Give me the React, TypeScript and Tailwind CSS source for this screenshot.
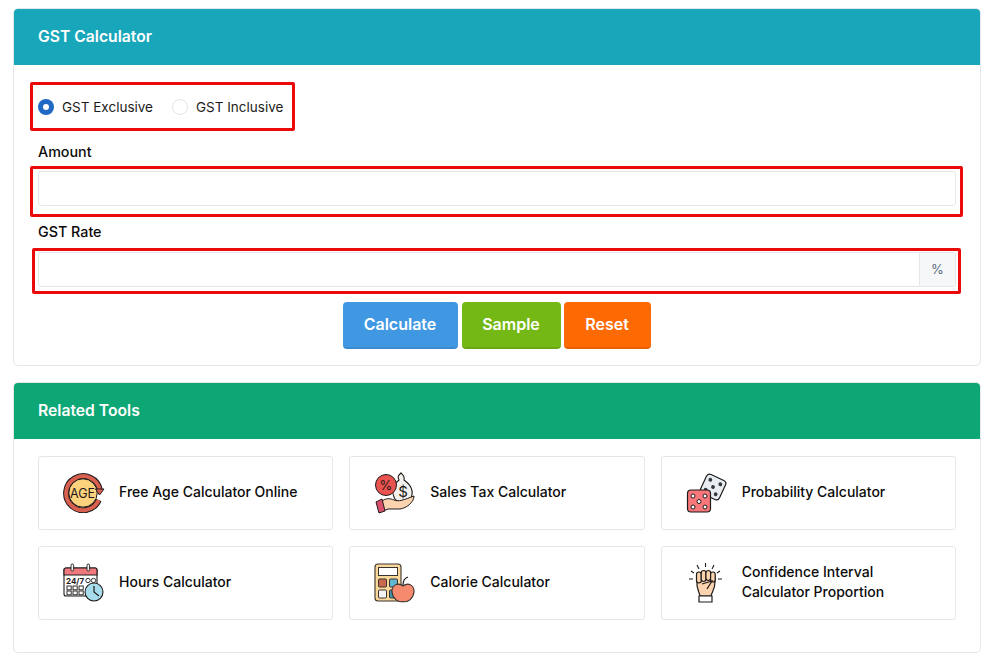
const font = { fontFamily: '"Inter", "Noto Sans", sans-serif' };

function AgeIcon() {
  return (
    <svg width="42" height="40" viewBox="0 0 42 40">
      <path d="M35.7 27 A17 17 0 1 1 36.8 17" fill="none" stroke="#1f1a1a" strokeWidth="6" />
      <path d="M35.7 27 A17 17 0 1 1 36.8 17" fill="none" stroke="#d9604f" strokeWidth="4" />
      <circle cx="20" cy="20" r="14.2" fill="#fdd27d" stroke="#1f1a1a" strokeWidth="1" />
      <path d="M32.5 16 H41 L36.5 22 Z" fill="#d9604f" stroke="#1f1a1a" strokeWidth="1" />
      <text x="19.5" y="24.5" textAnchor="middle" fontSize="12.5" fill="#1f1a1a" fontFamily="Inter, sans-serif">AGE</text>
    </svg>
  );
}

function TaxIcon() {
  return (
    <svg width="42" height="42" viewBox="0 0 42 42">
      <path d="M25 8 C23 4 25 3 27 1 C29 3 31 4 30 8 C37 13 40 19 37 26 C34 30 24 31 21 27 C17 20 19 13 25 8 Z" fill="#f2f0ec" stroke="#1f1a1a" strokeWidth="1.1" />
      <text x="29" y="25" textAnchor="middle" fontSize="15" fill="#1f1a1a" fontFamily="Inter, sans-serif">$</text>
      <circle cx="12" cy="13" r="10.5" fill="#e8524f" stroke="#1f1a1a" strokeWidth="1" />
      <text x="12" y="18" textAnchor="middle" fontSize="13" fill="#1f1a1a" fontFamily="Inter, sans-serif">%</text>
      <path d="M7 30 C11 26 16 26 20 28 C24 30 30 28 40 24 C40 30 33 36 26 37 L14 37 L9 39 Z" fill="#fbd3ae" stroke="#1f1a1a" strokeWidth="1" />
      <path d="M2 30 L8 27 L11 39 L5 41 Z" fill="#d9506a" stroke="#1f1a1a" strokeWidth="1" />
    </svg>
  );
}

function DiceIcon() {
  const pipsBack = [[21.5, 8.5], [32.5, 8.5], [27, 14], [21.5, 19.5], [32.5, 19.5]];
  const pipsFront = [[7, 23], [19, 23], [13, 28.5], [7, 34], [19, 34]];
  return (
    <svg width="42" height="40" viewBox="0 0 42 40">
      <g transform="rotate(25 27 14)">
        <rect x="16.5" y="3.5" width="21" height="21" rx="3.5" fill="#e7edf1" stroke="#1f1a1a" strokeWidth="1.2" />
        {pipsBack.map(([x, y], i) => <circle key={i} cx={x} cy={y} r="1.9" fill="#34393d" />)}
      </g>
      <rect x="1.5" y="17" width="23" height="22" rx="3.5" fill="#f7777a" stroke="#1f1a1a" strokeWidth="1.2" />
      {pipsFront.map(([x, y], i) => <circle key={i} cx={x} cy={y} r="2" fill="#fff" stroke="#1f1a1a" strokeWidth="1" />)}
    </svg>
  );
}

function HoursIcon() {
  const cells = [0, 1, 2, 3, 4, 5];
  return (
    <svg width="42" height="40" viewBox="0 0 42 40">
      <rect x="1" y="5" width="33" height="28" rx="2" fill="#fff" stroke="#1f1a1a" strokeWidth="1.1" />
      <path d="M1 12 V7 a2 2 0 0 1 2 -2 H32 a2 2 0 0 1 2 2 V12 Z" fill="#f0797d" stroke="#1f1a1a" strokeWidth="1.1" />
      <rect x="8" y="1" width="2.6" height="7" rx="1.3" fill="#f2f2f2" stroke="#1f1a1a" strokeWidth="0.9" />
      <rect x="24" y="1" width="2.6" height="7" rx="1.3" fill="#f2f2f2" stroke="#1f1a1a" strokeWidth="0.9" />
      <text x="3" y="20.5" fontSize="8" fontWeight="700" fill="#1f1a1a" fontFamily="Inter, sans-serif">24/7</text>
      <circle cx="25" cy="17.5" r="2.2" fill="none" stroke="#1f1a1a" strokeWidth="0.9" />
      <circle cx="30.5" cy="17.5" r="2.2" fill="none" stroke="#1f1a1a" strokeWidth="0.9" />
      {cells.map((i) => (
        <rect key={i} x={4 + (i % 3) * 6} y={23 + Math.floor(i / 3) * 5} width="4.2" height="3.8" fill="none" stroke="#1f1a1a" strokeWidth="0.9" />
      ))}
      <circle cx="31" cy="29" r="9" fill="#a6dcec" stroke="#1f1a1a" strokeWidth="1.1" />
      <path d="M31 23 V29 L36 33" fill="none" stroke="#1f1a1a" strokeWidth="1.2" />
    </svg>
  );
}

function CalorieIcon() {
  return (
    <svg width="41" height="40" viewBox="0 0 41 40">
      <rect x="1" y="1" width="26" height="37" rx="3" fill="#f9d89a" stroke="#3a3230" strokeWidth="1.1" />
      <rect x="4.5" y="4.5" width="19" height="8" fill="#fff" stroke="#3a3230" strokeWidth="1" />
      <rect x="4.5" y="16" width="8" height="8" rx="1" fill="#c9694f" stroke="#3a3230" strokeWidth="1" />
      <rect x="15.5" y="16" width="8" height="8" rx="1" fill="#62b6cf" stroke="#3a3230" strokeWidth="1" />
      <rect x="4.5" y="27" width="8" height="8" rx="1" fill="#f2f2f2" stroke="#3a3230" strokeWidth="1" />
      <rect x="15.5" y="27" width="8" height="8" rx="1" fill="#3d96ad" stroke="#3a3230" strokeWidth="1" />
      <path d="M29 22 C29 18 31 15 34 14" fill="none" stroke="#1f1a1a" strokeWidth="1.2" />
      <path d="M29 23 C34 19 40.5 22 40 29 C39.5 35 34 40 29 38.5 C24 40 18.5 35 18 29 C17.5 22 24 19 29 23 Z" fill="#f58a6e" stroke="#3a3230" strokeWidth="1.1" />
    </svg>
  );
}

function FistIcon() {
  return (
    <svg width="38" height="42" viewBox="0 0 38 42">
      <path d="M11 20 C10 26 13 29 14 34 H25 C26 30 29 27 29 20 V14 H11 Z" fill="#fbd3ae" stroke="#1f1a1a" strokeWidth="1.2" />
      <rect x="10.5" y="10" width="4.8" height="11" rx="2.4" fill="#fbd3ae" stroke="#1f1a1a" strokeWidth="1.2" />
      <rect x="15.2" y="8.5" width="4.8" height="11" rx="2.4" fill="#fbd3ae" stroke="#1f1a1a" strokeWidth="1.2" />
      <rect x="19.9" y="8.5" width="4.8" height="10" rx="2.4" fill="#fbd3ae" stroke="#1f1a1a" strokeWidth="1.2" />
      <rect x="24.6" y="10" width="4.6" height="10" rx="2.3" fill="#fbd3ae" stroke="#1f1a1a" strokeWidth="1.2" />
      <path d="M16 22 L26 19 L21 27" fill="#fbd3ae" stroke="#1f1a1a" strokeWidth="1.2" />
      <path d="M13 34 H26 V40 H13 Z" fill="#fff" stroke="#1f1a1a" strokeWidth="1.2" />
      <path d="M19.5 1 V5 M11 3 L13 7 M28 3 L26 7 M5 9 L8 11 M34 9 L31 11 M3 17 H7 M32 17 H36" stroke="#1f1a1a" strokeWidth="1.1" />
    </svg>
  );
}

const tools = [
  { name: "Free Age Calculator Online", icon: <AgeIcon /> },
  { name: "Sales Tax Calculator", icon: <TaxIcon /> },
  { name: "Probability Calculator", icon: <DiceIcon /> },
  { name: "Hours Calculator", icon: <HoursIcon /> },
  { name: "Calorie Calculator", icon: <CalorieIcon /> },
  { name: "Confidence Interval Calculator Proportion", icon: <FistIcon /> },
];

export default function App() {
  return (
    <div className="min-h-[666px] bg-white pt-[8px] pl-[13px] pr-[12px] text-[#0b0b0b]" style={font}>
      <section className="rounded-[5px] border border-[#e4e7ea] overflow-hidden">
        <h2 className="h-[56px] bg-[#18a6bb] pl-[24px] flex items-center text-white text-[15.7px] font-semibold">GST Calculator</h2>
        <div className="px-[24px] pt-[34px] pb-[16px]">
          <div className="relative flex items-center h-[16px] text-[13.5px] text-[#1c1c1c]">
            <div className="absolute left-[-8px] top-[-17px] w-[265px] h-[49px] border-[3px] border-[#ea0a0a] rounded-[2px]" />
            <span className="w-[16px] h-[16px] rounded-full bg-[#2069c4] flex items-center justify-center">
              <span className="w-[6px] h-[6px] rounded-full bg-white" />
            </span>
            <span className="ml-[8px] w-[110px]">GST Exclusive</span>
            <span className="w-[16px] h-[16px] rounded-full bg-white border border-[#e2e5e8]" />
            <span className="ml-[8px]">GST Inclusive</span>
          </div>
          <label className="block mt-[26px] pt-[1px] text-[14.3px] font-medium leading-[20px]">Amount</label>
          <div className="relative mt-[9px] h-[35px] rounded-[3px] border border-[#e4e7ea] bg-white">
            <div className="absolute left-[-9px] right-[-8px] top-[-6px] bottom-[-12px] border-[3px] border-[#ea0a0a] rounded-[2px]" />
          </div>
          <label className="block mt-[15px] pt-[1px] text-[14.3px] font-medium leading-[20px]">GST Rate</label>
          <div className="relative mt-[10px] h-[35px] rounded-[3px] border border-[#e4e7ea] bg-white flex justify-end">
            <div className="absolute left-[-7px] right-[-6px] top-[-5px] bottom-[-8px] border-[3px] border-[#ea0a0a] rounded-[2px]" />
            <span className="w-[36px] bg-[#f5f7f9] border-l border-[#e4e7ea] flex items-center justify-center text-[13px] text-[#5b6b7b]">%</span>
          </div>
          <div className="mt-[15px] flex justify-center text-white text-[16px] font-semibold">
            <button className="ml-[-1px] w-[115px] h-[47px] pb-[2px] rounded-[4px] bg-[#4098e3] border-b-2 border-[#3a8bd0]">Calculate</button>
            <button className="ml-[4px] w-[99px] h-[47px] pb-[2px] rounded-[4px] bg-[#74b816] border-b-2 border-[#69a714]">Sample</button>
            <button className="ml-[3px] w-[87px] h-[47px] pb-[2px] rounded-[4px] bg-[#fd6a04] border-b-2 border-[#e86104]">Reset</button>
          </div>
        </div>
      </section>

      <section className="mt-[16px] rounded-[5px] border border-[#e4e7ea] overflow-hidden">
        <h2 className="h-[56px] bg-[#0da776] pl-[24px] flex items-center text-white text-[15.7px] font-semibold">Related Tools</h2>
        <div className="px-[24px] pt-[17px] pb-[32px] grid grid-cols-3 gap-x-[16px] gap-y-[16px]">
          {tools.map((t) => (
            <a key={t.name} className="h-[74px] rounded-[3px] border border-[#e4e7ea] bg-white flex items-center">
              <span className="w-[80px] pl-[24px] flex items-center shrink-0">{t.icon}</span>
              <span className="text-[14px] font-medium leading-[20px] pr-[30px] pb-[2px]">{t.name}</span>
            </a>
          ))}
        </div>
      </section>
    </div>
  );
}
